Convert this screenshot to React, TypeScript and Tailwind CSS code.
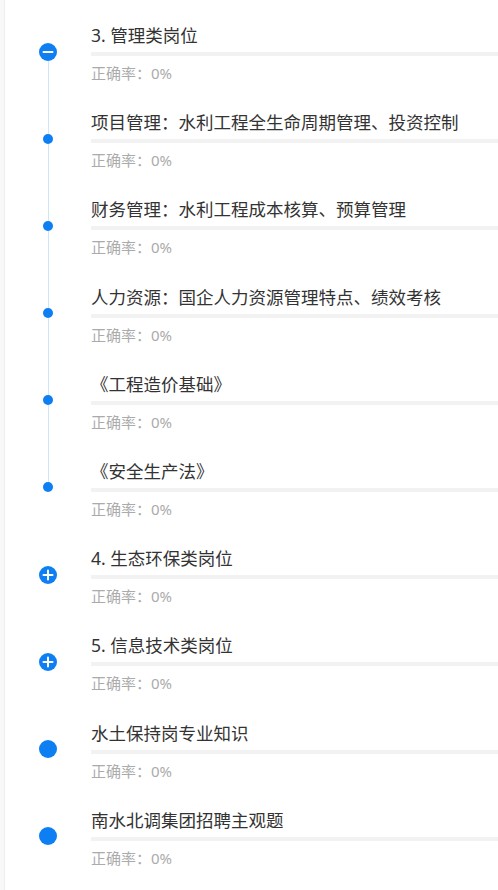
import React from "react";

type Kind = "minus" | "plus" | "dot" | "big";
type Row = { title: string; kind: Kind; lineTop: boolean; lineBottom: boolean };

const rows: Row[] = [
  { title: "3. 管理类岗位", kind: "minus", lineTop: false, lineBottom: true },
  { title: "项目管理：水利工程全生命周期管理、投资控制", kind: "dot", lineTop: true, lineBottom: true },
  { title: "财务管理：水利工程成本核算、预算管理", kind: "dot", lineTop: true, lineBottom: true },
  { title: "人力资源：国企人力资源管理特点、绩效考核", kind: "dot", lineTop: true, lineBottom: true },
  { title: "《工程造价基础》", kind: "dot", lineTop: true, lineBottom: true },
  { title: "《安全生产法》", kind: "dot", lineTop: true, lineBottom: false },
  { title: "4. 生态环保类岗位", kind: "plus", lineTop: false, lineBottom: false },
  { title: "5. 信息技术类岗位", kind: "plus", lineTop: false, lineBottom: false },
  { title: "水土保持岗专业知识", kind: "big", lineTop: false, lineBottom: false },
  { title: "南水北调集团招聘主观题", kind: "big", lineTop: false, lineBottom: false },
];

function Icon({ kind }: { kind: Kind }) {
  if (kind === "dot") {
    return <div className="h-[10px] w-[10px] shrink-0 rounded-full bg-[#0e7ff2]" />;
  }
  if (kind === "big") {
    return <div className="h-[18px] w-[18px] shrink-0 rounded-full bg-[#0e7ff2]" />;
  }
  return (
    <svg width="18" height="18" viewBox="0 0 18 18" className="shrink-0">
      <circle cx="9" cy="9" r="9" fill="#0e7ff2" />
      <line x1="4.5" y1="9" x2="13.5" y2="9" stroke="#fff" strokeWidth="2" strokeLinecap="round" />
      {kind === "plus" && (
        <line x1="9" y1="4.5" x2="9" y2="13.5" stroke="#fff" strokeWidth="2" strokeLinecap="round" />
      )}
    </svg>
  );
}

export default function App() {
  return (
    <div
      className="flex min-h-[890px] w-[498px] bg-white"
      style={{ fontFamily: '"Noto Sans", "Noto Sans CJK SC", sans-serif' }}
    >
      <div className="w-[5px] shrink-0 border-r border-[#efefef] bg-[#f8f8f8]" />
      <div className="flex flex-1 flex-col pt-[23px]">
        {rows.map((r, i) => {
          const small = r.kind === "dot";
          return (
            <div key={i} className="flex h-[87.2px]">
              <div className="flex w-[86px] shrink-0 flex-col items-center">
                <div
                  className={`w-px ${small ? "h-[23.5px]" : "h-[19.5px]"} ${
                    r.lineTop ? "bg-[#cfe5f8]" : "bg-transparent"
                  }`}
                />
                <Icon kind={r.kind} />
                <div className={`w-px flex-1 ${r.lineBottom ? "bg-[#cfe5f8]" : "bg-transparent"}`} />
              </div>
              <div className="flex min-w-0 flex-1 flex-col">
                <div className="whitespace-nowrap text-[17.5px] leading-[24px] text-[#333333]">{r.title}</div>
                <div className="mt-[5px] h-[4px] w-full bg-[#f2f2f2]" />
                <div className="mt-[7px] text-[15px] leading-[20px] text-[#ababab]">正确率：0%</div>
              </div>
            </div>
          );
        })}
      </div>
    </div>
  );
}
